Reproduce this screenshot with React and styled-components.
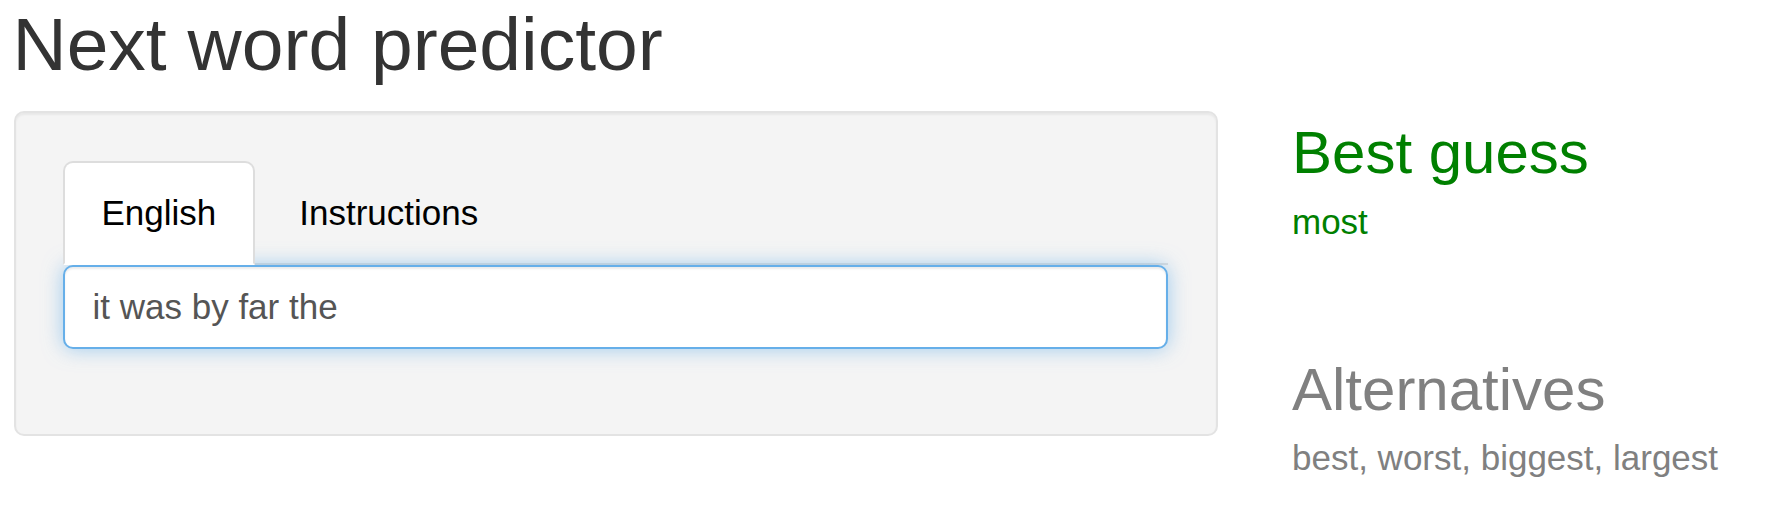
import React, { useState } from "react";
import styled, { createGlobalStyle } from "styled-components";

const GlobalStyle = createGlobalStyle`
  html, body {
    margin: 0;
    padding: 0;
    background: #fff;
  }
  body {
    font-family: "Liberation Sans", Arial, Helvetica, sans-serif;
    color: #333;
  }
  * {
    box-sizing: border-box;
  }
`;

const Page = styled.div`
  padding: 3px 0 0 13.5px;
  width: 1773px;
`;

// Title panel (h2 at 250% zoom)
const Title = styled.h2`
  font-size: 75px;
  line-height: 82.5px;
  font-weight: 400;
  color: #333;
  margin: 0 0 25px -1px;
`;

const Row = styled.div`
  display: flex;
  align-items: flex-start;
`;

// Grey well holding the tabs and the text box
const Well = styled.div`
  width: 1204px;
  background-color: #f4f4f4;
  border: 2px solid #e3e3e3;
  border-radius: 10px;
  box-shadow: inset 0 2px 2px rgba(0, 0, 0, 0.05);
  padding: 48px 48px 47.5px 47px;
`;

const Tabs = styled.ul`
  display: flex;
  list-style: none;
  margin: 0;
  padding: 0;
  border-bottom: 2px solid #ddd;
`;

const Tab = styled.li`
  margin: 0 5px -2px 0;
  padding: 25px 37px;
  font-size: 35px;
  line-height: 50px;
  color: #000;
  cursor: pointer;
  border: 2px solid ${(p) => (p.$active ? "#ddd" : "transparent")};
  border-bottom-color: transparent;
  border-radius: 10px 10px 0 0;
  background-color: ${(p) => (p.$active ? "#fff" : "transparent")};
`;

const FormGroup = styled.div`
  margin-bottom: 38px;
`;

const TextBox = styled.input`
  display: block;
  width: 1105px;
  height: 84px;
  padding: 0 28px;
  font-family: "Liberation Sans", Arial, Helvetica, sans-serif;
  font-size: 35px;
  color: #555;
  background-color: #fff;
  border: 2px solid #66afe9;
  border-radius: 10px;
  outline: none;
  box-shadow: inset 0 2px 2px rgba(0, 0, 0, 0.075),
    0 0 20px rgba(102, 175, 233, 0.6);
`;

// Right column with the predictions
const Results = styled.div`
  margin-left: 74.5px;
  padding-top: 9.5px;
`;

const Heading = styled.h3`
  font-size: 60px;
  line-height: 66px;
  font-weight: 400;
  margin: ${(p) => p.$gap}px 0 0 0;
  color: ${(p) => p.$tone};
`;

const Words = styled.div`
  font-size: 35px;
  line-height: 50px;
  margin-top: ${(p) => p.$gap}px;
  color: ${(p) => p.$tone};
`;

const GREEN = "#008000";
const GREY = "#808080";

function App() {
  const [tab, setTab] = useState("English");
  const [text, setText] = useState("it was by far the");

  return (
    <Page>
      <GlobalStyle />
      <Title>Next word predictor</Title>
      <Row>
        <Well>
          <Tabs>
            {["English", "Instructions"].map((name) => (
              <Tab key={name} $active={tab === name} onClick={() => setTab(name)}>
                {name}
              </Tab>
            ))}
          </Tabs>
          <FormGroup>
            <TextBox value={text} onChange={(e) => setText(e.target.value)} />
          </FormGroup>
        </Well>
        <Results>
          <Heading $gap={0} $tone={GREEN}>Best guess</Heading>
          <Words $gap={11} $tone={GREEN}>most</Words>
          <Heading $gap={110} $tone={GREY}>Alternatives</Heading>
          <Words $gap={10} $tone={GREY}>best, worst, biggest, largest</Words>
        </Results>
      </Row>
    </Page>
  );
}

export default App;
